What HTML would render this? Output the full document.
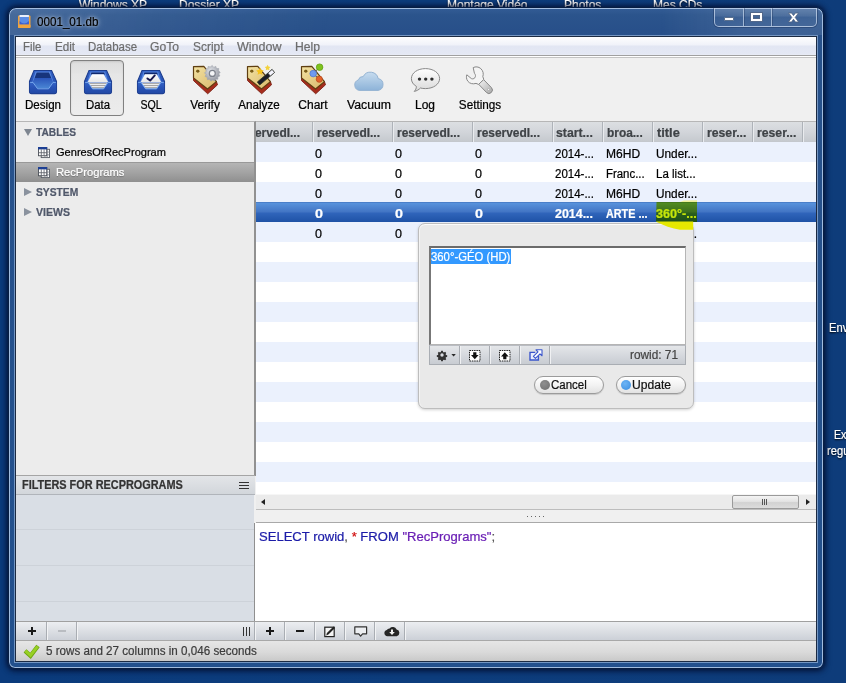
<!DOCTYPE html>
<html lang="en">
<head>
<meta charset="utf-8">
<title>0001_01.db</title>
<style>
*{box-sizing:border-box;margin:0;padding:0}
html,body{width:846px;height:683px;overflow:hidden}
body{position:relative;font-family:"Liberation Sans","DejaVu Sans",sans-serif;font-size:12px;color:#000;
 background:linear-gradient(90deg,#0b3b7c 0%,#0d3d7d 50%,#0e3c7a 100%)}
.a{position:absolute}
.t{position:absolute;white-space:nowrap;line-height:14px;height:14px;font-size:12px;-webkit-text-stroke:.22px currentColor}
.dl{color:#fff;text-shadow:0 1px 2px #000}
.tri{width:0;height:0;border-style:solid}
/* window frame */
#shadow{display:none}
#win{left:8px;top:7px;width:816px;height:662px;border-radius:8px 8px 7px 7px;
 background:linear-gradient(180deg,#345d96 0px,#2b548c 7px,#28508a 22px,#27518b 40px,#22508d 100%);
 border:1px solid #071d42;box-shadow:inset 0 0 0 1px rgba(175,200,232,.9),0 0 5px 1px rgba(0,10,40,.75),0 1px 7px 1px rgba(0,10,40,.45)}
#glare{left:10px;top:9px;width:812px;height:26px;border-radius:6px 6px 0 0;
 background:linear-gradient(90deg,rgba(255,255,255,0) 80%,rgba(255,255,255,.09) 90%,rgba(255,255,255,.10) 100%),linear-gradient(100deg,rgba(255,255,255,.13) 0%,rgba(255,255,255,.05) 18%,rgba(255,255,255,0) 40%)}
#capbtns{left:714px;top:8px;width:103px;height:19px;border:1px solid rgba(200,216,238,.75);border-top:none;border-radius:0 0 5px 5px;
 background:linear-gradient(180deg,rgba(255,255,255,.16) 0,rgba(255,255,255,.08) 45%,rgba(255,255,255,0) 50%,rgba(255,255,255,.04) 100%);box-shadow:0 0 0 1px rgba(20,40,80,.35)}
#capbtns i{position:absolute;top:0;width:1px;height:18px;background:rgba(200,216,238,.7);box-shadow:1px 0 0 rgba(20,40,80,.3)}
.ttl{color:#000;text-shadow:0 0 7px rgba(255,255,255,.6),0 0 4px rgba(255,255,255,.5),0 0 2px rgba(255,255,255,.3)}
#client{left:15px;top:36px;width:802px;height:626px;border:1px solid #1b2a42;background:#f0f0f0;box-shadow:0 0 0 1px rgba(160,188,224,.65)}
/* menu */
#menubar{left:16px;top:37px;width:800px;height:21px;background:linear-gradient(180deg,#fdfdfe 0,#f0f2f9 8px,#e2e6f3 9px,#e4e8f4 17px,#eaedf6 18px,#a0a0a0 18px,#a0a0a0 19px,#fff 19px,#fff 20px,#c4c4c4 20px)}
.mi{color:#6d6d6d}
/* toolbar */
#toolbar{left:16px;top:58px;width:800px;height:63px;background:#f0f0f0}
#databtn{left:70px;top:60px;width:54px;height:56px;border:1px solid #808080;border-radius:4px;background:linear-gradient(180deg,#dedede 0,#e4e4e4 12px,#e6e6e6 13px,#ececec 100%);box-shadow:inset 0 1px 2px rgba(0,0,0,.10)}
.tl{color:#000}
/* sidebar */
#sidebar{left:16px;top:121px;width:240px;height:355px;background:#ececec;border-top:1px solid #b6b6b6;border-right:2px solid #919191}
.sh{font-weight:bold;color:#50586a;font-size:11px}
.si{font-size:11px}
#selrow{left:16px;top:162px;width:238px;height:20px;background:linear-gradient(180deg,#b5b5b5 0,#a3a3a3 50%,#8f8f8f 100%);border-top:1px solid #999}
/* table */
#tbl{left:256px;top:121px;width:560px;height:374px;background:#fff;border-top:1px solid #b6b6b6}
#thead{left:256px;top:122px;width:560px;height:20px;background:linear-gradient(180deg,#dcdfe2 0,#d2d5da 10px,#c6cacf 19px,#c2c6cc 20px)}
#clip1{left:256px;top:122px;width:56px;height:20px;overflow:hidden}
.cs{top:122px;width:2px;height:20px;background:linear-gradient(90deg,#aeb3b9 0 1px,#e9ebee 1px 2px)}
.th{font-weight:bold;color:#3f4347}
.stripe{left:256px;width:560px;height:20px;background:#ebf1fd}
.td{color:#000}
#rowsel{left:256px;top:202px;width:560px;height:20px;background:linear-gradient(180deg,#4a7fc9 0,#4a7fc9 1px,#5893dc 1px,#4274c4 10px,#3065bb 11px,#1e52a6 100%)}
.ts{font-weight:bold;color:#fff}
/* filters */
#fhead{left:16px;top:475px;width:239px;height:20px;background:linear-gradient(180deg,#e3e5e8 0,#d2d6db 100%);border-top:1px solid #a5a5a5;border-bottom:1px solid #b0b4ba}
.fh{font-weight:bold;color:#333}
#fbody{left:16px;top:495px;width:238px;height:127px;background:#d9dee5}
.fl{left:16px;width:238px;height:1px;background:#cdd2d9}
#vdiv{left:254px;top:523px;width:1px;height:98px;background:#8f8f8f}
#hs{left:256px;top:494px;width:560px;height:16px;background:#ebebeb;border-top:1px solid #f6f6f6;border-bottom:1px solid #bdbdbd}
#thumb{left:732px;top:495px;width:67px;height:14px;border:1px solid #9a9a9a;border-radius:2px;background:linear-gradient(180deg,#f4f4f4 0,#e4e4e4 45%,#d2d2d2 55%,#dcdcdc 100%)}
#split{left:256px;top:510px;width:560px;height:13px;background:#f0f0f0;border-bottom:1px solid #a9a9a9}
#sql{left:255px;top:523px;width:561px;height:98px;background:#fff}
.sq{font-size:13px;line-height:16px;height:16px}
#bbar{left:16px;top:621px;width:800px;height:20px;background:linear-gradient(180deg,#eceef1 0,#dcdfe4 50%,#ccd0d7 100%);border-top:1px solid #a0a0a0;border-bottom:1px solid #a8a8a8}
.bs{top:622px;width:2px;height:18px;background:linear-gradient(90deg,#a9adb3 0 1px,#f2f3f5 1px 2px)}
.pm{position:absolute;background:#1a1a1a}
#status{left:16px;top:641px;width:800px;height:20px;background:linear-gradient(180deg,#e6e6e6 0,#dadada 55%,#c9c9c9 100%)}
.st{color:#3c3c3c}
/* popup */
#pop{left:418px;top:223px;width:276px;height:186px;border-radius:7px;background:#e9e9e9;border:1px solid #bdbdbd;box-shadow:inset 0 1px 0 #fbfbfb,inset 1px 0 0 #f4f4f4,0 1px 3px rgba(0,0,0,.18)}
#ta{left:429px;top:246px;width:257px;height:99px;background:#fff;border:1px solid #b5b5b5;border-top:2px solid #6b6b6b;border-left:2px solid #777}
#selbg{left:431px;top:249px;width:80px;height:15px;background:#3399ff}
.sel{color:#fff}
#ptb{left:429px;top:345px;width:257px;height:20px;background:linear-gradient(180deg,#e4e6e9 0,#d6d9de 50%,#c8ccd2 100%);border:1px solid #a9adb3;border-top-color:#b9bcc2}
.ps{top:346px;width:2px;height:18px;background:linear-gradient(90deg,#a9adb3 0 1px,#f0f1f3 1px 2px)}
.pb{top:376px;height:18px;border:1px solid #9b9b9b;border-radius:9px;background:linear-gradient(180deg,#ffffff 0,#f3f3f3 50%,#e2e2e2 100%);box-shadow:0 1px 1px rgba(0,0,0,.15)}
.bt{color:#111;font-size:12.5px}
</style>
</head>
<body>
<div class="t dl" style="left:79px;top:-2px">Windows XP</div>
<div class="t dl" style="left:179px;top:-2px">Dossier XP</div>
<div class="t dl" style="left:447px;top:-2px">Montage Vidéo</div>
<div class="t dl" style="left:564px;top:-2px">Photos</div>
<div class="t dl" style="left:653px;top:-2px">Mes CDs</div>
<div class="t dl" style="left:829px;top:321px;transform:scaleX(.93);transform-origin:0 50%">Env</div>
<div class="t dl" style="left:834px;top:428px;transform:scaleX(.88);transform-origin:0 50%">Ex</div>
<div class="t dl" style="left:826.5px;top:444px;transform:scaleX(.93);transform-origin:0 50%">regu</div>
<div class="a" id="shadow"></div><div class="a" id="win"></div><div class="a" id="glare"></div>
<div class="a" id="capbtns"><i style="left:28px"></i><i style="left:56px"></i></div>
<div class="a" style="left:724px;top:17px;width:10px;height:4px;background:#fff;border:1px solid #5a6f8c;border-radius:1px"></div>
<div class="a" style="left:751px;top:13px;width:11px;height:8px;border:2px solid #fff;border-top-width:2px;box-shadow:0 0 0 1px #51678a,inset 0 0 0 1px #51678a"></div>
<svg class="a" style="left:787px;top:12px" width="13" height="11" viewBox="0 0 13 11"><path d="M1.5 1 L4.6 1 L6.5 3.6 L8.4 1 L11.5 1 L8.2 5.4 L11.6 10 L8.4 10 L6.5 7.3 L4.6 10 L1.4 10 L4.8 5.4 Z" fill="#fff" stroke="#4b607f" stroke-width=".8"/></svg>
<div class="t ttl" id="t0" style="left:36.5px;top:15px;transform:scaleX(0.9699);transform-origin:0 50%;">0001_01.db</div>
<div class="a" id="client"></div><div class="a" id="menubar"></div>
<div class="t mi" id="t1" style="left:22.9px;top:40px;transform:scaleX(0.9460);transform-origin:0 50%;">File</div>
<div class="t mi" id="t2" style="left:54.8px;top:40px;transform:scaleX(0.9716);transform-origin:0 50%;">Edit</div>
<div class="t mi" id="t3" style="left:88.2px;top:40px;transform:scaleX(0.9538);transform-origin:0 50%;">Database</div>
<div class="t mi" id="t4" style="left:150.2px;top:40px;transform:scaleX(1.0109);transform-origin:0 50%;">GoTo</div>
<div class="t mi" id="t5" style="left:193.2px;top:40px;transform:scaleX(0.9939);transform-origin:0 50%;">Script</div>
<div class="t mi" id="t6" style="left:237.2px;top:40px;transform:scaleX(1.0425);transform-origin:0 50%;">Window</div>
<div class="t mi" id="t7" style="left:295.2px;top:40px;transform:scaleX(1.0127);transform-origin:0 50%;">Help</div>
<div class="a" id="toolbar"></div><div class="a" id="databtn"></div>
<div class="t tl" id="t8" style="left:43.1px;top:98px;transform:translateX(-50%) scaleX(0.9663);transform-origin:50% 50%;">Design</div>
<div class="t tl" id="t9" style="left:98.1px;top:98px;transform:translateX(-50%) scaleX(0.9503);transform-origin:50% 50%;">Data</div>
<div class="t tl" id="t10" style="left:150.5px;top:98px;transform:translateX(-50%) scaleX(0.8828);transform-origin:50% 50%;">SQL</div>
<div class="t tl" id="t11" style="left:205.2px;top:98px;transform:translateX(-50%) scaleX(0.9895);transform-origin:50% 50%;">Verify</div>
<div class="t tl" id="t12" style="left:259px;top:98px;transform:translateX(-50%) scaleX(0.9695);transform-origin:50% 50%;">Analyze</div>
<div class="t tl" id="t13" style="left:312.6px;top:98px;transform:translateX(-50%) scaleX(1.0019);transform-origin:50% 50%;">Chart</div>
<div class="t tl" id="t14" style="left:369px;top:98px;transform:translateX(-50%) scaleX(1.0222);transform-origin:50% 50%;">Vacuum</div>
<div class="t tl" id="t15" style="left:425px;top:98px;transform:translateX(-50%) scaleX(0.9984);transform-origin:50% 50%;">Log</div>
<div class="t tl" id="t16" style="left:480px;top:98px;transform:translateX(-50%) scaleX(0.9779);transform-origin:50% 50%;">Settings</div>
<div class="a" id="sidebar"></div>
<div class="a tri" style="left:24px;top:129px;border-width:7px 4px 0 4px;border-color:#7d8590 transparent transparent transparent"></div>
<div class="t sh" id="t17" style="left:35.9px;top:125px;transform:scaleX(0.9262);transform-origin:0 50%;">TABLES</div>
<div class="t si" id="t18" style="left:55.9px;top:145px;transform:scaleX(1.0051);transform-origin:0 50%;">GenresOfRecProgram</div>
<div class="a" id="selrow"></div>
<div class="t si" id="t19" style="left:55.9px;top:165px;transform:scaleX(1.0156);transform-origin:0 50%;color:#fff;text-shadow:0 1px 1px rgba(0,0,0,.3)">RecPrograms</div>
<div class="a tri" style="left:24px;top:188px;border-width:4px 0 4px 8px;border-color:transparent transparent transparent #8a929e"></div>
<div class="t sh" id="t20" style="left:35.9px;top:185px;transform:scaleX(0.9351);transform-origin:0 50%;">SYSTEM</div>
<div class="a tri" style="left:24px;top:208px;border-width:4px 0 4px 8px;border-color:transparent transparent transparent #8a929e"></div>
<div class="t sh" id="t21" style="left:35.9px;top:205px;transform:scaleX(0.9590);transform-origin:0 50%;">VIEWS</div>
<div class="a" id="tbl"></div><div class="a" id="thead"></div>
<div class="a stripe" style="top:142px;height:20px"></div>
<div class="a stripe" style="top:182px;height:20px"></div>
<div class="a stripe" style="top:222px;height:20px"></div>
<div class="a stripe" style="top:262px;height:20px"></div>
<div class="a stripe" style="top:302px;height:20px"></div>
<div class="a stripe" style="top:342px;height:20px"></div>
<div class="a stripe" style="top:382px;height:20px"></div>
<div class="a stripe" style="top:422px;height:20px"></div>
<div class="a stripe" style="top:462px;height:20px"></div>
<div class="a cs" style="left:312px"></div>
<div class="a cs" style="left:392px"></div>
<div class="a cs" style="left:472px"></div>
<div class="a cs" style="left:552px"></div>
<div class="a cs" style="left:602px"></div>
<div class="a cs" style="left:652px"></div>
<div class="a cs" style="left:702px"></div>
<div class="a cs" style="left:752px"></div>
<div class="a cs" style="left:802px"></div>
<div class="a" id="clip1">
<div class="t th" id="t22" style="left:-19.5px;top:4px;transform:scaleX(0.9941);transform-origin:0 50%;">reservedI...</div>
</div>
<div class="t th" id="t23" style="left:316.5px;top:126px;transform:scaleX(0.9941);transform-origin:0 50%;">reservedI...</div>
<div class="t th" id="t24" style="left:396.5px;top:126px;transform:scaleX(0.9941);transform-origin:0 50%;">reservedI...</div>
<div class="t th" id="t25" style="left:476.5px;top:126px;transform:scaleX(0.9941);transform-origin:0 50%;">reservedI...</div>
<div class="t th" id="t26" style="left:555.8px;top:126px;transform:scaleX(1.0218);transform-origin:0 50%;">start...</div>
<div class="t th" id="t27" style="left:606.5px;top:126px;transform:scaleX(0.9912);transform-origin:0 50%;">broa...</div>
<div class="t th" id="t28" style="left:656.8px;top:126px;transform:scaleX(1.0682);transform-origin:0 50%;">title</div>
<div class="t th" id="t29" style="left:706.5px;top:126px;transform:scaleX(1.0180);transform-origin:0 50%;">reser...</div>
<div class="t th" id="t30" style="left:756.5px;top:126px;transform:scaleX(1.0180);transform-origin:0 50%;">reser...</div>
<div class="a" id="rowsel"></div>
<div class="t td" id="t31" style="left:315.2px;top:147px;transform:scaleX(1.0467);transform-origin:0 50%;">0</div>
<div class="t td" id="t32" style="left:395.2px;top:147px;transform:scaleX(1.0467);transform-origin:0 50%;">0</div>
<div class="t td" id="t33" style="left:475.2px;top:147px;transform:scaleX(1.0467);transform-origin:0 50%;">0</div>
<div class="t td" id="t34" style="left:555.2px;top:147px;transform:scaleX(0.9582);transform-origin:0 50%;">2014-...</div>
<div class="t td" id="t35" style="left:605.8px;top:147px;transform:scaleX(1.0025);transform-origin:0 50%;">M6HD</div>
<div class="t td" id="t36" style="left:655.5px;top:147px;transform:scaleX(0.9850);transform-origin:0 50%;">Under...</div>
<div class="t td" id="t37" style="left:315.2px;top:167px;transform:scaleX(1.0467);transform-origin:0 50%;">0</div>
<div class="t td" id="t38" style="left:395.2px;top:167px;transform:scaleX(1.0467);transform-origin:0 50%;">0</div>
<div class="t td" id="t39" style="left:475.2px;top:167px;transform:scaleX(1.0467);transform-origin:0 50%;">0</div>
<div class="t td" id="t40" style="left:555.2px;top:167px;transform:scaleX(0.9582);transform-origin:0 50%;">2014-...</div>
<div class="t td" id="t41" style="left:605.8px;top:167px;transform:scaleX(0.9512);transform-origin:0 50%;">Franc...</div>
<div class="t td" id="t42" style="left:655.5px;top:167px;transform:scaleX(0.9599);transform-origin:0 50%;">La list...</div>
<div class="t td" id="t43" style="left:315.2px;top:187px;transform:scaleX(1.0467);transform-origin:0 50%;">0</div>
<div class="t td" id="t44" style="left:395.2px;top:187px;transform:scaleX(1.0467);transform-origin:0 50%;">0</div>
<div class="t td" id="t45" style="left:475.2px;top:187px;transform:scaleX(1.0467);transform-origin:0 50%;">0</div>
<div class="t td" id="t46" style="left:555.2px;top:187px;transform:scaleX(0.9582);transform-origin:0 50%;">2014-...</div>
<div class="t td" id="t47" style="left:605.8px;top:187px;transform:scaleX(1.0025);transform-origin:0 50%;">M6HD</div>
<div class="t td" id="t48" style="left:655.5px;top:187px;transform:scaleX(0.9850);transform-origin:0 50%;">Under...</div>
<div class="t ts" id="t49" style="left:315.2px;top:207px;transform:scaleX(1.1963);transform-origin:0 50%;">0</div>
<div class="t ts" id="t50" style="left:395.2px;top:207px;transform:scaleX(1.1963);transform-origin:0 50%;">0</div>
<div class="t ts" id="t51" style="left:475.2px;top:207px;transform:scaleX(1.1963);transform-origin:0 50%;">0</div>
<div class="t ts" id="t52" style="left:555.2px;top:207px;transform:scaleX(1.0353);transform-origin:0 50%;">2014...</div>
<div class="t ts" id="t53" style="left:605.8px;top:207px;transform:scaleX(0.8997);transform-origin:0 50%;">ARTE ...</div>
<div class="t ts" id="t54" style="left:656.2px;top:207px;transform:scaleX(1.0482);transform-origin:0 50%;color:#d8f23a">360°-...</div>
<div class="t td" id="t55" style="left:315.2px;top:227px;transform:scaleX(1.0467);transform-origin:0 50%;">0</div>
<div class="t td" id="t56" style="left:395.2px;top:227px;transform:scaleX(1.0467);transform-origin:0 50%;">0</div>
<div class="t td" id="t57" style="left:693.7px;top:227px;">.</div>
<div class="a" id="fhead"></div>
<div class="t fh" id="t58" style="left:22.4px;top:478px;transform:scaleX(0.9078);transform-origin:0 50%;">FILTERS FOR RECPROGRAMS</div>
<div class="a" style="left:239px;top:482px;width:10px;height:1px;background:#333;box-shadow:0 3px 0 #333,0 6px 0 #333"></div>
<div class="a" id="fbody"></div>
<div class="a fl" style="top:529px"></div>
<div class="a fl" style="top:565px"></div>
<div class="a fl" style="top:601px"></div>
<div class="a" id="hs"></div>
<div class="a tri" style="left:261px;top:499px;border-width:3px 4px 3px 0;border-color:transparent #222 transparent transparent"></div>
<div class="a tri" style="left:806px;top:499px;border-width:3px 0 3px 4px;border-color:transparent transparent transparent #222"></div>
<div class="a" id="thumb"></div>
<div class="a" style="left:762px;top:499px;width:1px;height:6px;background:#555;box-shadow:2px 0 0 #555,4px 0 0 #555"></div>
<div class="a" id="split"></div>
<div class="a" style="left:527px;top:516px;width:1px;height:1px;background:#666;box-shadow:4px 0 0 #666,8px 0 0 #666,12px 0 0 #666,16px 0 0 #666"></div>
<div class="a" id="sql"></div>
<div class="t sq" id="t59" style="left:258.5px;top:529px;transform:scaleX(1.0039);transform-origin:0 50%;"><span style="color:#1c1ca8">SELECT rowid</span><span style="color:#555">,</span> <span style="color:#d01010">*</span> <span style="color:#1c1ca8">FROM</span> <span style="color:#6a1fb5">"RecPrograms"</span><span style="color:#555">;</span></div>
<div class="a" id="bbar"></div><div class="a" id="vdiv"></div>
<div class="a bs" style="left:46px"></div>
<div class="a bs" style="left:76px"></div>
<div class="a bs" style="left:254px"></div>
<div class="a bs" style="left:284px"></div>
<div class="a bs" style="left:314px"></div>
<div class="a bs" style="left:344px"></div>
<div class="a bs" style="left:374px"></div>
<div class="a bs" style="left:404px"></div>
<div class="pm" style="left:28px;top:630px;width:8px;height:2px"></div><div class="pm" style="left:31px;top:627px;width:2px;height:8px"></div>
<div class="pm" style="left:58px;top:630px;width:8px;height:2px;background:#b9bcc1"></div>
<div class="a" style="left:243px;top:627px;width:1px;height:9px;background:#333;box-shadow:3px 0 0 #333,6px 0 0 #333"></div>
<div class="pm" style="left:266px;top:630px;width:8px;height:2px"></div><div class="pm" style="left:269px;top:627px;width:2px;height:8px"></div>
<div class="pm" style="left:296px;top:630px;width:8px;height:2px"></div>
<div class="a" id="status"></div>
<div class="t st" id="t60" style="left:46.2px;top:644px;transform:scaleX(0.9689);transform-origin:0 50%;">5 rows and 27 columns in 0,046 seconds</div>
<div class="a" id="pop"></div><div class="a" id="ta"></div>
<div class="a" id="selbg"></div>
<div class="t sel" id="t61" style="left:431.2px;top:250px;transform:scaleX(0.9435);transform-origin:0 50%;">360°-GÉO (HD)</div>
<div class="a" id="ptb"></div>
<div class="a ps" style="left:459px"></div>
<div class="a ps" style="left:489px"></div>
<div class="a ps" style="left:519px"></div>
<div class="a ps" style="left:549px"></div>
<div class="t st" id="t62" style="left:629.5px;top:348px;transform:scaleX(0.9856);transform-origin:0 50%;color:#444">rowid: 71</div>
<div class="a pb" style="left:534px;width:70px"></div>
<div class="a" style="left:540px;top:380px;width:10px;height:10px;border-radius:5px;background:radial-gradient(circle at 40% 35%,#909090,#6e6e6e)"></div>
<div class="t bt" id="t63" style="left:551.0px;top:378px;transform:scaleX(0.9198);transform-origin:0 50%;">Cancel</div>
<div class="a pb" style="left:616px;width:70px"></div>
<div class="a" style="left:621px;top:380px;width:10px;height:10px;border-radius:5px;background:radial-gradient(circle at 40% 35%,#6db4f5,#3a8de0)"></div>
<div class="t bt" id="t64" style="left:631.8px;top:378px;transform:scaleX(0.9699);transform-origin:0 50%;">Update</div>
<svg class="a" style="left:0;top:0" width="846" height="683" viewBox="0 0 846 683">
<linearGradient id="gTray" x1="0" y1="0" x2="0" y2="1"><stop offset="0" stop-color="#3463c6"/><stop offset=".5" stop-color="#2853b6"/><stop offset="1" stop-color="#2249a6"/></linearGradient>
<linearGradient id="gFloor" x1="0" y1="0" x2="0" y2="1"><stop offset="0" stop-color="#2a54ba"/><stop offset="1" stop-color="#4a86d4"/></linearGradient>
<linearGradient id="gPaper" x1="0" y1="0" x2="0" y2="1"><stop offset="0" stop-color="#ffffff"/><stop offset="1" stop-color="#e6e6e6"/></linearGradient>
<linearGradient id="gTag" x1="0" y1="0" x2="1" y2="1"><stop offset="0" stop-color="#f3e2a2"/><stop offset="1" stop-color="#d9b96c"/></linearGradient>
<linearGradient id="gCloud" x1="0" y1="0" x2="0" y2="1"><stop offset="0" stop-color="#c7dcef"/><stop offset="1" stop-color="#8db3d8"/></linearGradient>
<linearGradient id="gBub" x1="0" y1="0" x2="0" y2="1"><stop offset="0" stop-color="#ffffff"/><stop offset="1" stop-color="#d9d9d9"/></linearGradient>
<linearGradient id="gWr" x1="0" y1="0" x2="1" y2="1"><stop offset="0" stop-color="#f6f6f6"/><stop offset="1" stop-color="#a9a9a9"/></linearGradient>
<radialGradient id="gGear" cx=".4" cy=".35" r=".7"><stop offset="0" stop-color="#e2e4e9"/><stop offset="1" stop-color="#8d919b"/></radialGradient>

<!-- title bar icon -->
<g transform="translate(18,15)">
 <rect x="0" y=".5" width="12.5" height="12.5" rx="1" fill="#f0a23c"/>
 <rect x="1.6" y="0" width="9.3" height="9.5" fill="#5b8de6"/>
 <rect x="1.6" y="0" width="9.3" height="2" fill="#e8eefc"/>
 <path d="M1.6 6 Q6.2 11 10.9 6 V9.8 H1.6 Z" fill="#3c5fd0"/>
 <rect x="0" y="9.6" width="12.5" height="3.4" rx="1" fill="#f2a53e"/>
</g>

<!-- Design -->
<g transform="translate(29,70)">
 <g >
 <path d="M5 .5 H22.6 L27.5 11.3 V21.5 Q27.5 23.6 25.4 23.6 H2.6 Q.5 23.6 .5 21.5 V11.3 Z" fill="url(#gTray)" stroke="#1d3d8e" stroke-width="1.1"/>
 <path d="M6.6 1.8 H21 L24.6 12.2 H3.2 Z" fill="#5c8be2"/>
</g>
 <path d="M7.6 2.6 H20 L22.3 8 H5.6 Z" fill="#17347c"/>
 <path d="M5.6 8 H22.3 L24.3 12.2 L20 18.4 H8.4 L3.4 12.2 Z" fill="url(#gFloor)"/>
 <path d="M.8 12.2 H4.2 L8.6 18.6 H19.8 L24 12.2 H27.2 V21.4 Q27.2 23.2 25.4 23.2 H2.6 Q.8 23.2 .8 21.4 Z" fill="url(#gTray)"/>
 <path d="M1.2 12.4 H4 L8.6 18.8 H19.6 L24 12.4 H26.8" fill="none" stroke="#7fb0f0" stroke-width=".9"/>
</g>
<!-- Data -->
<g transform="translate(84,70)">
 <g >
 <path d="M5 .5 H22.6 L27.5 11.3 V21.5 Q27.5 23.6 25.4 23.6 H2.6 Q.5 23.6 .5 21.5 V11.3 Z" fill="url(#gTray)" stroke="#1d3d8e" stroke-width="1.1"/>
 <path d="M6.6 1.8 H21 L24.6 12.2 H3.2 Z" fill="#5c8be2"/>
</g>
 <path d="M7.4 2.6 H20.2 L20.8 4.4 H6.8 Z" fill="#10286e"/>
 <path d="M8 4.2 H19.6 L24.4 12.4 H3.4 Z" fill="url(#gPaper)"/>
 <path d="M.8 12.2 H27.2 V21.4 Q27.2 23.2 25.4 23.2 H2.6 Q.8 23.2 .8 21.4 Z" fill="url(#gTray)"/>
 <path d="M4.4 12.6 H23.4 L19.6 18.6 H8.6 Z" fill="#f4f4f4"/>
 <path d="M5.6 13.6 H22.4 M6.8 15.5 H21.2 M7.9 17.4 H20.2" stroke="#9a9a9a" stroke-width=".9"/>
 <path d="M1.2 12.4 H4 L8.6 18.9 H19.6 L24 12.4 H26.8" fill="none" stroke="#7fb0f0" stroke-width=".9"/>
</g>
<!-- SQL -->
<g transform="translate(137,70)">
 <g >
 <path d="M5 .5 H22.6 L27.5 11.3 V21.5 Q27.5 23.6 25.4 23.6 H2.6 Q.5 23.6 .5 21.5 V11.3 Z" fill="url(#gTray)" stroke="#1d3d8e" stroke-width="1.1"/>
 <path d="M6.6 1.8 H21 L24.6 12.2 H3.2 Z" fill="#5c8be2"/>
</g>
 <path d="M7.4 2.6 H20.2 L20.8 4.4 H6.8 Z" fill="#10286e"/>
 <path d="M8 4.2 H19.6 L24.4 12.4 H3.4 Z" fill="url(#gPaper)"/>
 <path d="M.8 12.2 H27.2 V21.4 Q27.2 23.2 25.4 23.2 H2.6 Q.8 23.2 .8 21.4 Z" fill="url(#gTray)"/>
 <path d="M4.4 12.6 H23.4 L19.6 18.6 H8.6 Z" fill="#f4f4f4"/>
 <path d="M5.6 13.6 H22.4 M6.8 15.5 H21.2 M7.9 17.4 H20.2" stroke="#9a9a9a" stroke-width=".9"/>
 <path d="M1.2 12.4 H4 L8.6 18.9 H19.6 L24 12.4 H26.8" fill="none" stroke="#7fb0f0" stroke-width=".9"/>
 <path d="M10.4 8.4 L13.2 10.6 L17.8 5.4" fill="none" stroke="#1a1a50" stroke-width="1.9" stroke-linecap="round" stroke-linejoin="round"/>
</g>

<!-- Verify -->
<g transform="translate(193,66)">
 <g >
 <path d="M.5 11.6 V14.6 L14.7 27.8 L24.5 18.8 L23.4 15.4 L14.5 22.8 Z" fill="#a62c1c" stroke="#7c1e12" stroke-width=".9" stroke-linejoin="round"/>
 <path d="M.5 .6 L10.8 .3 L23.4 15.6 L14.5 23 L.5 11.9 Z" fill="url(#gTag)" stroke="#5e3e10" stroke-width="1.2" stroke-linejoin="round"/>
 <ellipse cx="4.8" cy="5.2" rx="1.4" ry="1.1" fill="#8a6a1a" stroke="#5a400c" stroke-width=".7"/>
</g>
 <g transform="translate(19.3,7.4) scale(1.2)">
  <path d="M0-6.6 L1.2-5 L2.9-5.9 L3.5-4 L5.4-4.1 L5.2-2.2 L6.6-.9 L5.4.4 L6.3 2.1 L4.6 2.9 L4.7 4.8 L2.8 4.8 L2 6.4 L.4 5.4 L-1.2 6.5 L-2.2 4.9 L-4.1 5.2 L-4.2 3.3 L-6 2.6 L-5.2.9 L-6.5-.5 L-5-1.7 L-5.6-3.5 L-3.8-3.9 L-3.5-5.8 L-1.7-5.4 Z" fill="url(#gGear)" stroke="#a3a7b0" stroke-width=".5"/>
  <circle r="2.5" fill="#f4f5f7" stroke="#7d828c" stroke-width="1"/>
 </g>
</g>
<!-- Analyze -->
<g transform="translate(247,66)">
 <g >
 <path d="M.5 11.6 V14.6 L14.7 27.8 L24.5 18.8 L23.4 15.4 L14.5 22.8 Z" fill="#a62c1c" stroke="#7c1e12" stroke-width=".9" stroke-linejoin="round"/>
 <path d="M.5 .6 L10.8 .3 L23.4 15.6 L14.5 23 L.5 11.9 Z" fill="url(#gTag)" stroke="#5e3e10" stroke-width="1.2" stroke-linejoin="round"/>
 <ellipse cx="4.8" cy="5.2" rx="1.4" ry="1.1" fill="#8a6a1a" stroke="#5a400c" stroke-width=".7"/>
</g>
 <path d="M10.3 16 L12.7 19 L27.5 6.5 L25.1 3.5 Z" fill="#1c1c28" stroke="#2c3a22" stroke-width=".8" stroke-linejoin="round"/>
 <path d="M20.9 7.1 L23.3 10 L27.5 6.5 L25.1 3.5 Z" fill="#f6f6ff" stroke="#444" stroke-width=".7" stroke-linejoin="round"/>
 <path d="M13 1.6 l1.2 2.4 2.6.4-1.9 1.8.5 2.6-2.4-1.2-2.4 1.2.5-2.6-1.9-1.8 2.6-.4z" fill="#f6c21a"/>
 <path style="display:none" d="M14 8.6 l1 2 2.2.3-1.6 1.6.4 2.2-2-1-2 1 .4-2.2-1.6-1.6 2.2-.3z" fill="#f6c21a"/>
 <path d="M20.6 -1.2 l.9 1.8 2 .3-1.4 1.4.3 2-1.8-.9-1.8.9.3-2-1.4-1.4 2-.3z" fill="#f3d23a"/>
 <path style="display:none" d="M20.2 4.6 l.8 1.6 1.8.3-1.3 1.2.3 1.8-1.6-.8-1.6.8.3-1.8-1.3-1.2 1.8-.3z" fill="#f3d23a"/>
</g>
<!-- Chart -->
<g transform="translate(301,66)">
 <g >
 <path d="M.5 11.6 V14.6 L14.7 27.8 L24.5 18.8 L23.4 15.4 L14.5 22.8 Z" fill="#a62c1c" stroke="#7c1e12" stroke-width=".9" stroke-linejoin="round"/>
 <path d="M.5 .6 L10.8 .3 L23.4 15.6 L14.5 23 L.5 11.9 Z" fill="url(#gTag)" stroke="#5e3e10" stroke-width="1.2" stroke-linejoin="round"/>
 <ellipse cx="4.8" cy="5.2" rx="1.4" ry="1.1" fill="#8a6a1a" stroke="#5a400c" stroke-width=".7"/>
</g>
 <path d="M18.6 1.2 L12.2 7.6 L18.3 13.2" fill="none" stroke="#555" stroke-width="1"/>
 <circle cx="18.6" cy="1.2" r="3.3" fill="#7fc31c" stroke="#5a9a10" stroke-width=".7"/>
 <circle cx="12.2" cy="7.6" r="3.3" fill="#6f9af0" stroke="#4a74d0" stroke-width=".7"/>
 <circle cx="18.3" cy="13.2" r="3.1" fill="#e2622a" stroke="#b8461a" stroke-width=".7"/>
</g>
<!-- Vacuum cloud -->
<g transform="translate(354,70)">
 <path d="M6 20.4 A5.4 5.4 0 0 1 4.4 9.9 A4.6 4.6 0 0 1 9.2 6.6 A8 8 0 0 1 24.2 8.6 A6 6 0 0 1 24 20.4 Z" fill="url(#gCloud)" stroke="#94b3d3" stroke-width="1"/>
</g>
<!-- Log bubble -->
<g transform="translate(411,68)">
 <path d="M14.4 .6 C22.4 .6 28.6 5 28.6 10.6 C28.6 16.2 22.4 20.6 14.4 20.6 C12.6 20.6 10.9 20.4 9.4 20 C8 21.6 5.8 22.9 3.2 23.4 C4.6 22 5.4 20.4 5.4 18.4 C2.2 16.6 .4 13.8 .4 10.6 C.4 5 6.4 .6 14.4 .6 Z" fill="url(#gBub)" stroke="#888" stroke-width="1"/>
 <circle cx="8.5" cy="11.1" r="1.7" fill="#2e2e2e"/><circle cx="14.7" cy="11.1" r="1.7" fill="#2e2e2e"/><circle cx="20.9" cy="11.1" r="1.7" fill="#2e2e2e"/>
</g>
<!-- Settings wrench -->
<g transform="translate(466,66)">
 <path d="M12.6 18.2 L20.4 26.4 A3.4 3.4 0 0 0 25.4 21.6 L17.6 13.6 Z" fill="url(#gWr)" stroke="#888" stroke-width="1"/>
 <path d="M7.2 1.6 C9.4 .4 12.6 .6 14.8 2.6 C17.2 4.8 17.8 8 16.8 10.6 L17.8 13.4 L12.6 18.4 L10 17.4 C6.8 18.4 3.6 17.6 1.8 15.2 C.2 13 .2 10.4 .8 8.8 L5.4 12.6 C7 13.4 9 12.4 9.4 10.6 C9.8 9 9 8 8.4 7.2 Z" fill="#f4f4f4" stroke="#888" stroke-width="1" stroke-linejoin="round"/>
 <circle cx="22.6" cy="23.6" r="1" fill="#fff" stroke="#999" stroke-width=".6"/>
</g>

<!-- sidebar table icons -->
<g transform="translate(38,147) scale(.92)">
 <rect x="3.5" y="2.5" width="9" height="9" fill="#fff" stroke="#5b6068" stroke-width="1"/>
 <path d="M3.5 5.5 H12.5 M3.5 8.5 H12.5 M7.5 2.5 V11.5 M10 2.5 V11.5" stroke="#777c85" stroke-width=".8" fill="none"/>
 <rect x=".5" y=".5" width="9" height="9" fill="#fff" stroke="#4b5058" stroke-width="1"/>
 <rect x="0" y="0" width="10" height="2.6" fill="#1d3f93"/>
 <path d="M.5 6.2 H9.5 M3.6 2.6 V9.5 M6.6 2.6 V9.5" stroke="#5b6068" stroke-width=".9" fill="none"/>
</g>
<g transform="translate(38,167) scale(.92)">
 <rect x="3.5" y="2.5" width="9" height="9" fill="#fff" stroke="#5b6068" stroke-width="1"/>
 <path d="M3.5 5.5 H12.5 M3.5 8.5 H12.5 M7.5 2.5 V11.5 M10 2.5 V11.5" stroke="#777c85" stroke-width=".8" fill="none"/>
 <rect x=".5" y=".5" width="9" height="9" fill="#fff" stroke="#4b5058" stroke-width="1"/>
 <rect x="0" y="0" width="10" height="2.6" fill="#1d3f93"/>
 <path d="M.5 6.2 H9.5 M3.6 2.6 V9.5 M6.6 2.6 V9.5" stroke="#5b6068" stroke-width=".9" fill="none"/>
</g>

<!-- popup toolbar icons -->
<g transform="translate(442,355)">
 <path d="M-1-5.2h2l.4 1.5 1.1.5 1.4-.8 1.4 1.4-.8 1.4.5 1.1 1.5.4v2l-1.5.4-.5 1.1.8 1.4-1.4 1.4-1.4-.8-1.1.5-.4 1.5h-2l-.4-1.5-1.1-.5-1.4.8-1.4-1.4.8-1.4-.5-1.1-1.5-.4v-2l1.5-.4.5-1.1-.8-1.4 1.4-1.4 1.4.8 1.1-.5z" fill="#333" transform="scale(.8)"/>
 <circle r="1.7" fill="#d9dce1"/>
 <path d="M9.4-1 h4.4 l-2.2 2.4z" fill="#2b2b2b"/>
</g>
<g transform="translate(469,350)">
 <rect x=".5" y=".5" width="10.5" height="10.5" fill="#fff" stroke="#222" stroke-width="1" stroke-dasharray="1.5 .8"/>
 <path d="M4.2 2.2 h3.2 v2.8 h2.2 L5.8 9.2 L2 5 h2.2z" fill="#111"/>
</g>
<g transform="translate(499,350)">
 <rect x=".5" y=".5" width="10.5" height="10.5" fill="#fff" stroke="#222" stroke-width="1" stroke-dasharray="1.5 .8"/>
 <path d="M4.2 9.3 h3.2 v-2.8 h2.2 L5.8 2.3 L2 6.5 h2.2z" fill="#111"/>
</g>
<g transform="translate(529,349)">
 <path d="M6.2 3.4 H1 V11 H9.4 V6.8" fill="#e8ecfb" stroke="#3a55cc" stroke-width="1.4"/>
 <path d="M7 .8 H13 V6.8 L11 4.8 L6.4 9.4 L4.4 7.4 L9 2.8 Z" fill="#fff" stroke="#3a55cc" stroke-width="1.1" stroke-linejoin="round"/>
</g>

<!-- bottom toolbar icons -->
<g transform="translate(324,626)">
 <rect x=".8" y="1.2" width="9.4" height="9.4" fill="#f4f4f4" stroke="#222" stroke-width="1.2"/>
 <path d="M2.2 9.4 L2.9 7 L9.5 .4 L11 1.9 L4.4 8.5 Z" fill="#222"/>
</g>
<g transform="translate(354,626)">
 <path d="M.8 .9 H12.6 V7.8 H8.6 L6.6 10.2 L4.8 7.8 H.8 Z" fill="#eceef1" stroke="#333" stroke-width="1.2" stroke-linejoin="round"/>
</g>
<g transform="translate(384,626)">
 <path d="M3.4 10.2 A3.2 3.2 0 0 1 2.8 3.9 A3 3 0 0 1 5.6 2.4 A4.2 4.2 0 0 1 12.6 3.4 A3.5 3.5 0 0 1 12.8 10.2 Z" fill="#262626"/>
 <path d="M7 3.6 h2 v2.4 h1.8 L8 9 L5.2 6 h1.8z" fill="#f2f2f2"/>
</g>

<!-- status check -->
<path d="M25 650.9 L30.5 655.8 L38 645.9" fill="none" stroke="#6fa512" stroke-width="4.2" stroke-linejoin="miter"/>
<path d="M25.4 650.9 L30.5 655.4 L37.6 646.3" fill="none" stroke="#98d024" stroke-width="2.8" stroke-linejoin="miter"/>

<!-- yellow highlighter mark -->
<path d="M656.5 202 L697 202 L697 222 L656 222 Z" fill="#e6f000" opacity=".85" style="mix-blend-mode:multiply"/>
<path d="M684 200.4 L697 200.2 L697 202 L680 202 Z" fill="#eef06a" opacity=".7"/>
<path d="M655.6 221.4 L693.2 221.6 L693.2 229.8 L680 229.8 C672 228.2 663.5 225.6 655.6 221.4 Z" fill="#e6e800"/>
</svg>

</body>
</html>
